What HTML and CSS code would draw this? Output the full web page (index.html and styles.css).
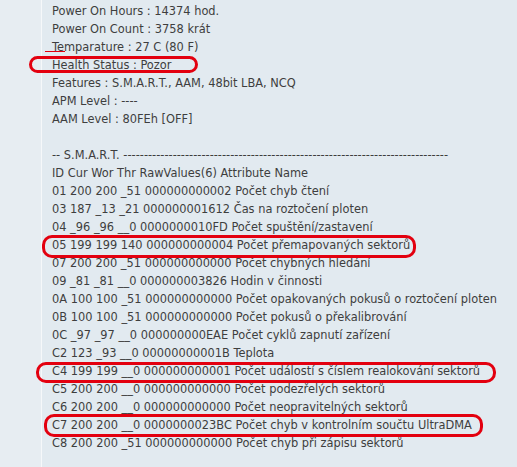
FILE: index.html
```html
<!DOCTYPE html>
<html lang="cs">
<head>
  <meta charset="UTF-8" />
  <title>S.M.A.R.T.</title>
  <link rel="stylesheet" href="styles.css">
</head>
<body>
  <div class="page">
    <div class="gutter"></div>
    <div class="report">
      <div class="line">Power On Hours : 14374 hod.</div>
      <div class="line">Power On Count : 3758 krát</div>
      <div class="line">Temparature : 27 C (80 F)</div>
      <div class="line">Health Status : Pozor</div>
      <div class="line">Features : S.M.A.R.T., AAM, 48bit LBA, NCQ</div>
      <div class="line">APM Level : ----</div>
      <div class="line">AAM Level : 80FEh [OFF]</div>
      <div class="line">&nbsp;</div>
      <div class="line">-- S.M.A.R.T. -------------------------------------------------------------------------------</div>
      <div class="line">ID Cur Wor Thr RawValues(6) Attribute Name</div>
      <div class="line">01 200 200 _51 000000000002 Počet chyb čtení</div>
      <div class="line">03 187 _13 _21 000000001612 Čas na roztočení ploten</div>
      <div class="line">04 _96 _96 __0 0000000010FD Počet spuštění/zastavení</div>
      <div class="line">05 199 199 140 000000000004 Počet přemapovaných sektorů</div>
      <div class="line">07 200 200 _51 000000000000 Počet chybných hledání</div>
      <div class="line">09 _81 _81 __0 000000003826 Hodin v činnosti</div>
      <div class="line">0A 100 100 _51 000000000000 Počet opakovaných pokusů o roztočení ploten</div>
      <div class="line">0B 100 100 _51 000000000000 Počet pokusů o překalibrování</div>
      <div class="line">0C _97 _97 __0 000000000EAE Počet cyklů zapnutí zařízení</div>
      <div class="line">C2 123 _93 __0 00000000001B Teplota</div>
      <div class="line">C4 199 199 __0 000000000001 Počet událostí s číslem realokování sektorů</div>
      <div class="line">C5 200 200 __0 000000000000 Počet podezřelých sektorů</div>
      <div class="line">C6 200 200 __0 000000000000 Počet neopravitelných sektorů</div>
      <div class="line">C7 200 200 __0 0000000023BC Počet chyb v kontrolním součtu UltraDMA</div>
      <div class="line">C8 200 200 _51 000000000000 Počet chyb při zápisu sektorů</div>
    </div>
  </div>

  <!-- hand-drawn red markers over the screenshot -->
  <div class="mark mark-tick"></div>
  <div class="mark mark-health"></div>
  <div class="mark mark-05"></div>
  <div class="mark mark-c4"></div>
  <div class="mark mark-c7"></div>
</body>
</html>
```
FILE: styles.css
```css
* {
  margin: 0;
  padding: 0;
  box-sizing: border-box;
}
body {
  font-family: "DejaVu Sans", Verdana, sans-serif;
  font-size: 11.4px;
  background-color: #e2eaf0;
  color: #3e3e3e;
  width: 517px;
  height: 467px;
  overflow: hidden;
  position: relative;
}
.page {
  display: flex;
  min-height: 467px;
}
.gutter {
  width: 42px;
  flex-shrink: 0;
  background-color: #e7edf2;
  border-right: 1px solid #f6f8fa;
}
.report {
  padding: 2px 0 0 10px;
  white-space: nowrap;
}
.line {
  line-height: 18px;
  height: 18px;
}
.mark {
  position: absolute;
  border: 3px solid #e3000f;
  border-radius: 10px;
}
.mark-tick {
  left: 45px;
  top: 51px;
  width: 20px;
  height: 0;
  border-width: 1px 0 0 0;
  border-radius: 0;
}
.mark-health {
  left: 29px;
  top: 56px;
  width: 169px;
  height: 17px;
}
.mark-05 {
  left: 42px;
  top: 235px;
  width: 374px;
  height: 23px;
}
.mark-c4 {
  left: 36px;
  top: 362px;
  width: 460px;
  height: 21px;
}
.mark-c7 {
  left: 44px;
  top: 414px;
  width: 439px;
  height: 23px;
}
```
